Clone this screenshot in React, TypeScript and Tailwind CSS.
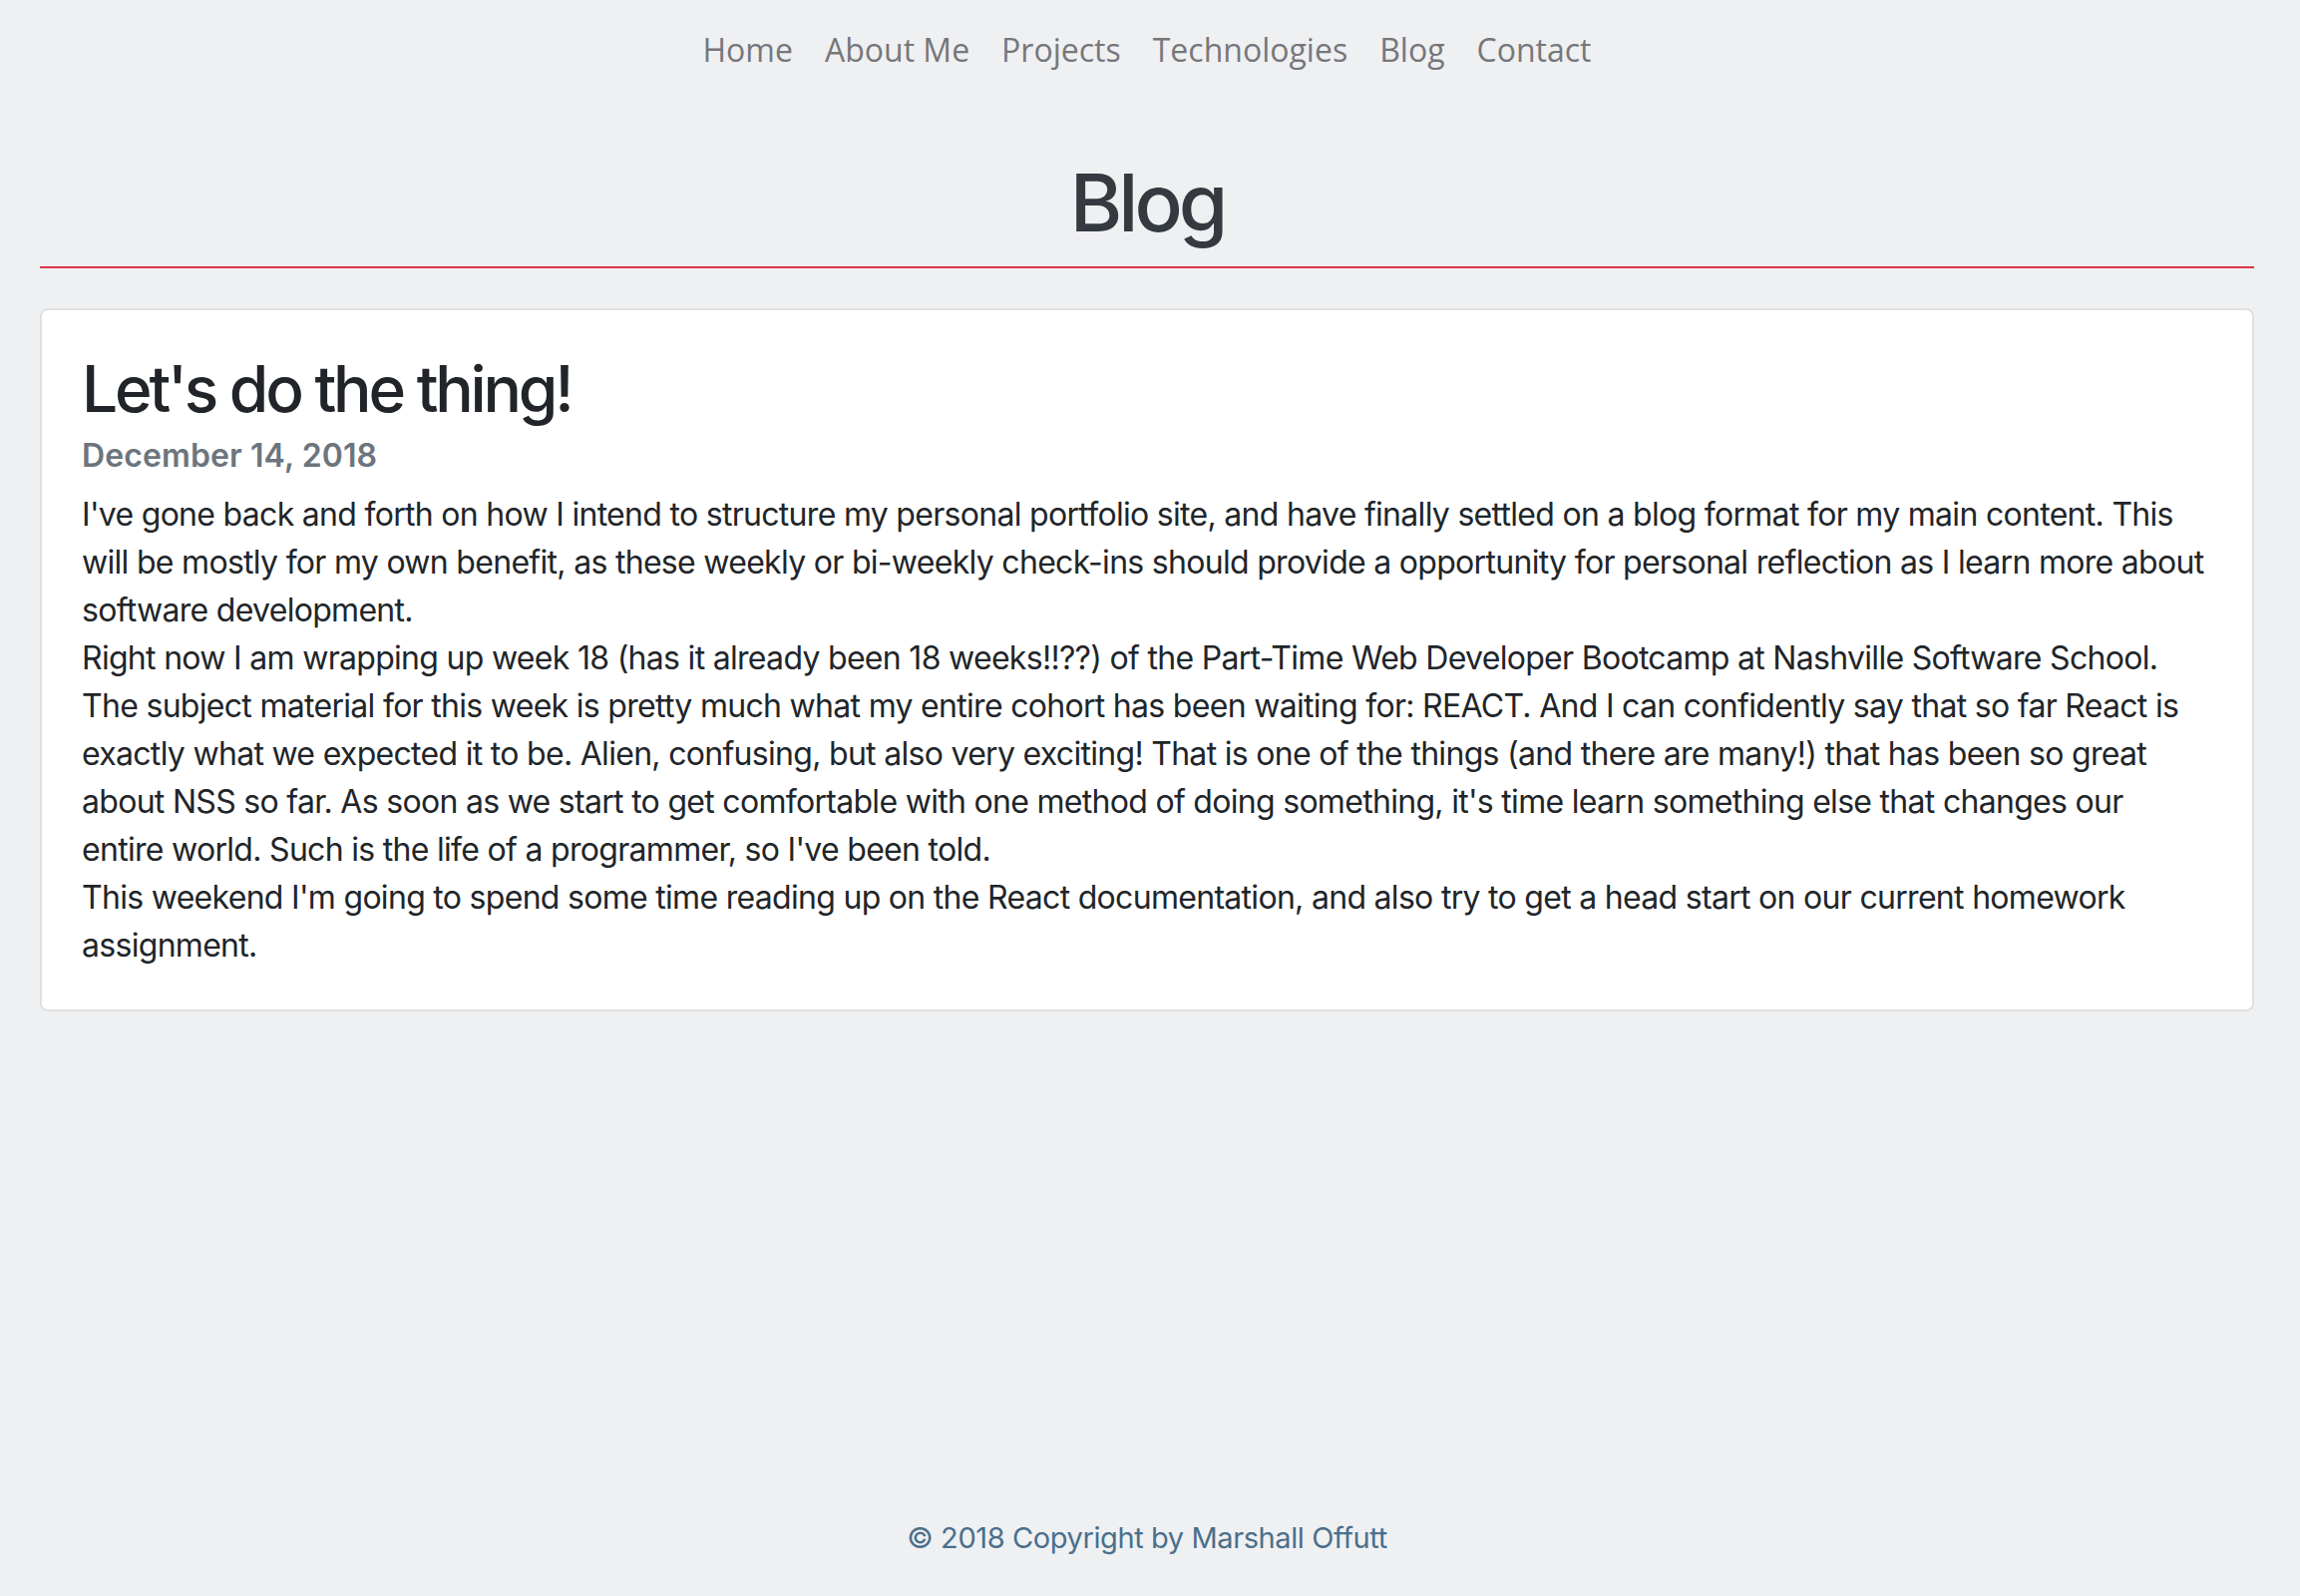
import React from "react";

const sans = { fontFamily: 'Inter, "Liberation Sans", sans-serif' };

export default function App() {
  const links = ["Home", "About Me", "Projects", "Technologies", "Blog", "Contact"];
  return (
    <div className="min-h-[1600px] bg-[#eff0f2] flex flex-col pl-[40px] pr-[46px]" style={sans}>
      <nav className="flex justify-center pt-[26px]" style={{ fontFamily: '"Open Sans", sans-serif' }}>
        {links.map((l) => (
          <a key={l} className="px-[16px] text-[32px] leading-[48px] text-[#76777b]">
            {l}
          </a>
        ))}
      </nav>
      <h1 className="mt-[81px] text-center text-[80px] leading-[96px] font-medium text-[#343a40] tracking-[-4px]">Blog</h1>
      <hr className="mt-[16px] border-0 h-[2px] bg-[#dc3545]" />
      <div className="mt-[40px] bg-white border-2 border-[#dfe0e2] rounded-[8px] p-[40px]">
        <h2 className="text-[64px] leading-[77px] font-medium text-[#212529] tracking-[-3.2px]">Let's do the thing!</h2>
        <h6 className="mt-[10px] text-[32px] leading-[38px] font-semibold text-[#6c757d] tracking-[0.1px]">December 14, 2018</h6>
        <div className="mt-[16px] text-[32px] leading-[48px] text-[#212529] tracking-[-0.7px]">
          <p>
            I've gone back and forth on how I intend to structure my personal portfolio site, and have finally settled on a blog format for my main content. This will be mostly for my own benefit, as these weekly or bi-weekly check-ins should provide a opportunity for personal reflection as I learn more about software development.
          </p>
          <p>
            Right now I am wrapping up week 18 (has it already been 18 weeks!!??) of the Part-Time Web Developer Bootcamp at Nashville Software School. The subject material for this week is pretty much what my entire cohort has been waiting for: REACT. And I can confidently say that so far React is exactly what we expected it to be. Alien, confusing, but also very exciting! That is one of the things (and there are many!) that has been so great about NSS so far. As soon as we start to get comfortable with one method of doing something, it's time learn something else that changes our entire world. Such is the life of a programmer, so I've been told.
          </p>
          <p>
            This weekend I'm going to spend some time reading up on the React documentation, and also try to get a head start on our current homework assignment.
          </p>
        </div>
      </div>
      <footer className="mt-auto pb-[34px] text-center text-[29px] leading-[48px] text-[#4a6f8c] tracking-[-0.4px]">
        © 2018 Copyright by Marshall Offutt
      </footer>
    </div>
  );
}
